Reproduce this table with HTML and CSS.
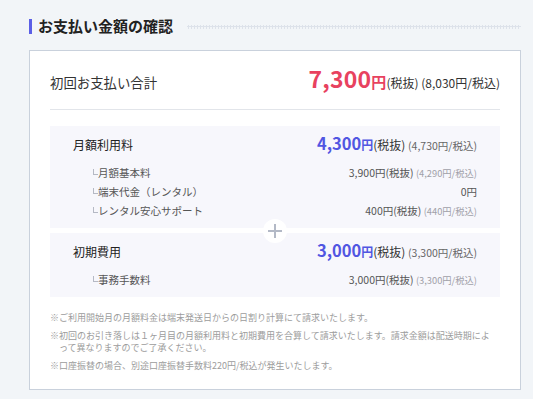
FILE: index.html
```html
<!DOCTYPE html>
<html lang="ja">
<head>
<meta charset="utf-8">
<title>お支払い金額の確認</title>
<link rel="stylesheet" href="styles.css">
</head>
<body>
<section class="confirm">
  <h2 class="heading"><span class="heading-text">お支払い金額の確認</span><span class="heading-dots"></span></h2>
  <div class="card">
    <div class="total">
      <span class="total-label">初回お支払い合計</span>
      <span class="total-price"><span class="num">7,300</span><span class="yen">円</span><span class="tax">(税抜)</span> <span class="incl">(8,030円/税込)</span></span>
    </div>
    <div class="breakdown">
      <div class="group group-first">
        <div class="group-head">
          <span class="group-label">月額利用料</span>
          <span class="group-price"><span class="num">4,300</span><span class="yen">円</span><span class="tax">(税抜)</span> <span class="incl">(4,730円/税込)</span></span>
        </div>
        <ul class="items">
          <li class="item"><span class="item-name">月額基本料</span><span class="item-price">3,900円(税抜) <span class="item-incl">(4,290円/税込)</span></span></li>
          <li class="item"><span class="item-name">端末代金（レンタル）</span><span class="item-price">0円</span></li>
          <li class="item"><span class="item-name">レンタル安心サポート</span><span class="item-price">400円(税抜) <span class="item-incl">(440円/税込)</span></span></li>
        </ul>
        <div class="plus"><svg width="16" height="16" viewBox="0 0 16 16"><path d="M8 1v14M1 8h14" stroke="#b3b9c6" stroke-width="2" fill="none"/></svg></div>
      </div>
      <div class="group">
        <div class="group-head">
          <span class="group-label">初期費用</span>
          <span class="group-price"><span class="num">3,000</span><span class="yen">円</span><span class="tax">(税抜)</span> <span class="incl">(3,300円/税込)</span></span>
        </div>
        <ul class="items">
          <li class="item"><span class="item-name">事務手数料</span><span class="item-price">3,000円(税抜) <span class="item-incl">(3,300円/税込)</span></span></li>
        </ul>
      </div>
    </div>
    <ul class="notes">
      <li>※ご利用開始月の月額料金は端末発送日からの日割り計算にて請求いたします。</li>
      <li>※初回のお引き落しは１ヶ月目の月額利用料と初期費用を合算して請求いたします。請求金額は配送時期によって異なりますのでご了承ください。</li>
      <li>※口座振替の場合、別途口座振替手数料220円/税込が発生いたします。</li>
    </ul>
  </div>
</section>
</body>
</html>
```
FILE: styles.css
```css
* { box-sizing: border-box; }
html, body { margin: 0; padding: 0; }
body {
  background: #f2f5f8;
  font-family: "Noto Sans CJK JP", "Noto Sans", sans-serif;
  color: #333;
}
.confirm {
  width: 492px;
  margin-left: 29px;
  padding-top: 14px;
}
.heading {
  display: flex;
  align-items: center;
  margin: 0;
  height: 24px;
  font-size: 15px;
  font-weight: 700;
  color: #222;
  line-height: 16px;
}
.heading::before {
  content: "";
  width: 3px;
  height: 15px;
  background: #5b5fe6;
  margin-right: 6px;
}
.heading-text { white-space: nowrap; }
.heading-dots {
  flex: 1;
  height: 4px;
  margin-left: 14px;
  margin-top: 1px;
  background-image: radial-gradient(circle, #dde2ea 1px, transparent 1.2px);
  background-size: 3px 3px;
}
.card {
  margin-top: 12px;
  background: #fff;
  border: 1px solid #c9d1dc;
  padding: 0 20px 17px;
}
.total {
  display: flex;
  justify-content: space-between;
  align-items: baseline;
  line-height: 32px;
  padding: 15px 0 10px;
  border-bottom: 1px solid #e2e5ea;
}
.total-label { font-size: 13.4px; color: #333; }
.total-price { white-space: nowrap; font-size: 12px; }
.total-price span, .group-price span, .item-incl { line-height: 1; }
.total-price .num { font-size: 23px; font-weight: 700; color: #e8425f; letter-spacing: 0.2px; }
.total-price .yen { font-size: 15px; font-weight: 700; color: #e8425f; }
.total-price .tax, .total-price .incl { font-size: 12px; color: #333; }
.breakdown {
  display: flex;
  flex-direction: column;
  gap: 5px;
  margin-top: 16px;
}
.group {
  background: #f7f7fc;
  padding: 7px 23px 8px;
}
.group-first { position: relative; }
.group-head {
  display: flex;
  justify-content: space-between;
  align-items: baseline;
  line-height: 24px;
}
.group-label { font-size: 12px; color: #222; }
.group-price { white-space: nowrap; font-size: 12px; }
.group-price .num { font-size: 16.5px; font-weight: 700; color: #5156e2; }
.group-price .yen { font-size: 12px; font-weight: 700; color: #5156e2; }
.group-price .tax { font-size: 12px; color: #333; }
.group-price .incl { font-size: 10.5px; color: #666; }
.items {
  list-style: none;
  margin: 6px 0 0;
  padding: 0;
}
.item {
  display: flex;
  justify-content: space-between;
  align-items: baseline;
  line-height: 19px;
  height: 19px;
  font-size: 10.5px;
}
.item-name {
  color: #555;
  padding-left: 25px;
  position: relative;
}
.item-name::before {
  content: "";
  position: absolute;
  left: 20px;
  top: 6px;
  width: 4px;
  height: 5px;
  border-left: 1px solid #b5b9c4;
  border-bottom: 1px solid #b5b9c4;
}
.item-price { color: #555; white-space: nowrap; }
.item-incl { font-size: 9.3px; color: #a0a0a8; }
.plus {
  position: absolute;
  left: 50%;
  bottom: -14.5px;
  width: 24px;
  height: 24px;
  margin-left: -12px;
  border-radius: 50%;
  background: #fff;
  display: flex;
  align-items: center;
  justify-content: center;
  z-index: 1;
}
.plus svg { display: block; }
.notes {
  list-style: none;
  margin: 15px 0 0;
  padding: 0 4px 0 0;
  font-size: 9px;
  line-height: 12px;
  color: #9c9c9c;
}
.notes li {
  padding-left: 1em;
  text-indent: -1em;
}
.notes li + li { margin-top: 6px; }
```
